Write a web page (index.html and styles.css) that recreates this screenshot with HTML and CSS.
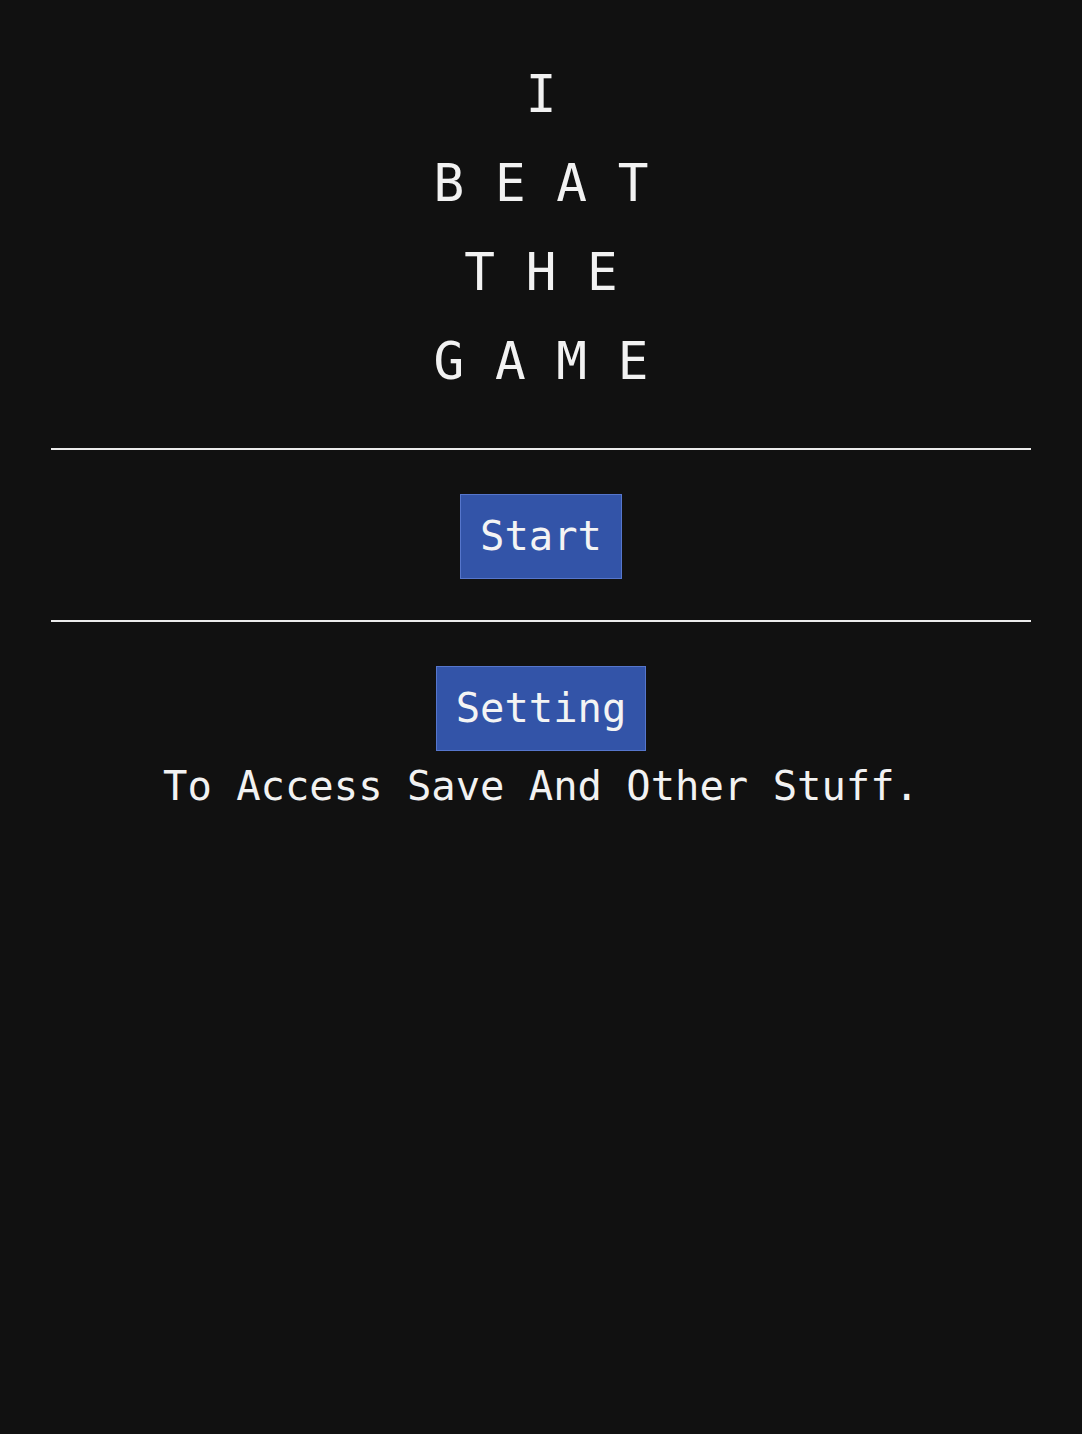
FILE: index.html
```html
<!DOCTYPE html>
<html lang="en">
<head>
<meta charset="utf-8">
<title>I Beat The Game</title>
<link rel="stylesheet" href="styles.css">
</head>
<body>
<main class="page">
  <h1 class="title">
    <span class="title-line">I</span>
    <span class="title-line">B E A T</span>
    <span class="title-line">T H E</span>
    <span class="title-line">G A M E</span>
  </h1>
  <hr class="rule rule-first">
  <div class="action action-start">
    <button class="btn" type="button">Start</button>
  </div>
  <hr class="rule rule-second">
  <div class="action action-setting">
    <button class="btn" type="button">Setting</button>
    <p class="note">To Access Save And Other Stuff.</p>
  </div>
</main>
</body>
</html>
```

FILE: styles.css
```css
html, body {
  margin: 0;
  padding: 0;
  background: #111111;
}

body {
  color: #f2f2f2;
  font-family: "DejaVu Sans Mono", "Liberation Mono", monospace;
  min-height: 1434px;
}

.page {
  padding: 0 51px;
  text-align: center;
}

.title {
  margin: 0;
  padding-top: 50px;
  font-size: 51px;
  font-weight: normal;
  line-height: 89px;
}

.title-line {
  display: block;
}

.rule {
  border: 0;
  border-top: 2px solid #ececec;
  margin: 0;
  height: 0;
}

.rule-first {
  margin-top: 42px;
}

.rule-second {
  margin-top: 41px;
}

.action {
  padding-top: 44px;
}

.btn {
  font-family: "DejaVu Sans Mono", "Liberation Mono", monospace;
  font-size: 40.5px;
  line-height: 47px;
  color: #f4f4f4;
  background: #3354a8;
  border: 1px solid #5676cc;
  padding: 18px 19px;
  margin: 0;
  display: inline-block;
  vertical-align: top;
}

.note {
  margin: 12px 0 0;
  font-size: 40.5px;
  line-height: 47px;
}
```
